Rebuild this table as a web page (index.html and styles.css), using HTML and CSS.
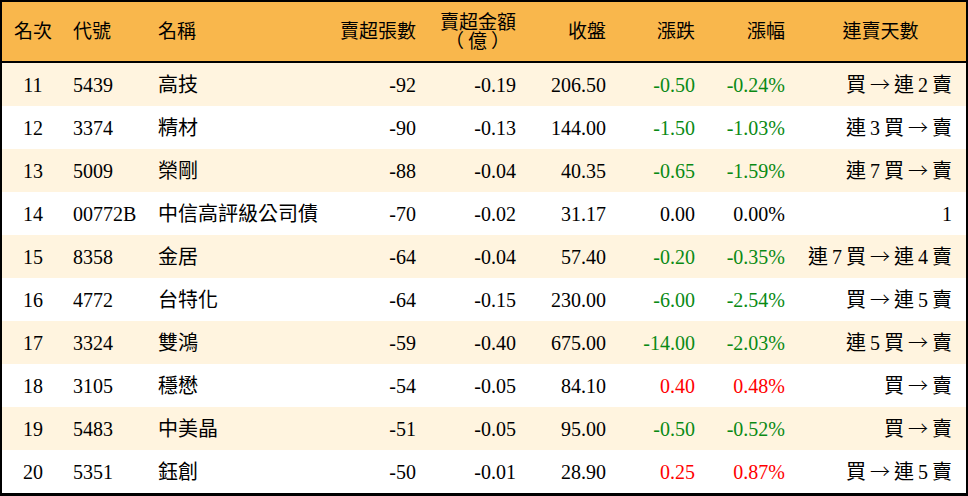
FILE: index.html
```html
<!DOCTYPE html>
<html lang="zh-Hant">
<head>
<meta charset="utf-8">
<link rel="stylesheet" href="styles.css">
</head>
<body>
<table class="rank">
  <colgroup>
    <col class="c-rank"><col class="c-code"><col class="c-name"><col class="c-vol"><col class="c-amt"><col class="c-close"><col class="c-chg"><col class="c-pct"><col class="c-days">
  </colgroup>
  <thead>
    <tr>
      <th class="center">名次</th>
      <th class="left">代號</th>
      <th class="left">名稱</th>
      <th class="right">賣超張數</th>
      <th class="right two">賣超金額<br><span class="paren">（億）</span></th>
      <th class="right">收盤</th>
      <th class="right">漲跌</th>
      <th class="right">漲幅</th>
      <th class="center">連賣天數</th>
    </tr>
  </thead>
  <tbody>
    <tr class="alt"><td class="center">11</td><td class="left">5439</td><td class="left">高技</td><td class="right">-92</td><td class="right">-0.19</td><td class="right">206.50</td><td class="right down">-0.50</td><td class="right down">-0.24%</td><td class="right days">買 <span class="arr">→</span> 連 2 賣</td></tr>
    <tr><td class="center">12</td><td class="left">3374</td><td class="left">精材</td><td class="right">-90</td><td class="right">-0.13</td><td class="right">144.00</td><td class="right down">-1.50</td><td class="right down">-1.03%</td><td class="right days">連 3 買 <span class="arr">→</span> 賣</td></tr>
    <tr class="alt"><td class="center">13</td><td class="left">5009</td><td class="left">榮剛</td><td class="right">-88</td><td class="right">-0.04</td><td class="right">40.35</td><td class="right down">-0.65</td><td class="right down">-1.59%</td><td class="right days">連 7 買 <span class="arr">→</span> 賣</td></tr>
    <tr><td class="center">14</td><td class="left">00772B</td><td class="left">中信高評級公司債</td><td class="right">-70</td><td class="right">-0.02</td><td class="right">31.17</td><td class="right">0.00</td><td class="right">0.00%</td><td class="right days">1</td></tr>
    <tr class="alt"><td class="center">15</td><td class="left">8358</td><td class="left">金居</td><td class="right">-64</td><td class="right">-0.04</td><td class="right">57.40</td><td class="right down">-0.20</td><td class="right down">-0.35%</td><td class="right days">連 7 買 <span class="arr">→</span> 連 4 賣</td></tr>
    <tr><td class="center">16</td><td class="left">4772</td><td class="left">台特化</td><td class="right">-64</td><td class="right">-0.15</td><td class="right">230.00</td><td class="right down">-6.00</td><td class="right down">-2.54%</td><td class="right days">買 <span class="arr">→</span> 連 5 賣</td></tr>
    <tr class="alt"><td class="center">17</td><td class="left">3324</td><td class="left">雙鴻</td><td class="right">-59</td><td class="right">-0.40</td><td class="right">675.00</td><td class="right down">-14.00</td><td class="right down">-2.03%</td><td class="right days">連 5 買 <span class="arr">→</span> 賣</td></tr>
    <tr><td class="center">18</td><td class="left">3105</td><td class="left">穩懋</td><td class="right">-54</td><td class="right">-0.05</td><td class="right">84.10</td><td class="right up">0.40</td><td class="right up">0.48%</td><td class="right days">買 <span class="arr">→</span> 賣</td></tr>
    <tr class="alt"><td class="center">19</td><td class="left">5483</td><td class="left">中美晶</td><td class="right">-51</td><td class="right">-0.05</td><td class="right">95.00</td><td class="right down">-0.50</td><td class="right down">-0.52%</td><td class="right days">買 <span class="arr">→</span> 賣</td></tr>
    <tr><td class="center">20</td><td class="left">5351</td><td class="left">鈺創</td><td class="right">-50</td><td class="right">-0.01</td><td class="right">28.90</td><td class="right up">0.25</td><td class="right up">0.87%</td><td class="right days">買 <span class="arr">→</span> 連 5 賣</td></tr>
  </tbody>
</table>
</body>
</html>
```
FILE: styles.css
```css
html, body {
  margin: 0;
  padding: 0;
  background: #ffffff;
}

.rank {
  width: 968px;
  border-collapse: separate;
  border-spacing: 0;
  table-layout: fixed;
  border: 2px solid #000;
  border-bottom-width: 3px;
  font-family: "Liberation Serif", "Noto Sans CJK TC", serif;
  font-size: 20px;
  color: #000;
}

.c-rank { width: 62px; }
.c-code { width: 86px; }
.c-name { width: 176px; }
.c-vol { width: 100px; }
.c-amt { width: 100px; }
.c-close { width: 90px; }
.c-chg { width: 89px; }
.c-pct { width: 90px; }
.c-days { width: 171px; }

.rank th {
  height: 59px;
  padding: 0 10px;
  font-weight: normal;
  background: #f9b74c;
  border-bottom: 2px solid #000;
  line-height: 19px;
  font-size: 19px;
  white-space: nowrap;
}

.rank th .paren {
  display: inline-block;
  padding-right: 2px;
  letter-spacing: 4px;
}

.rank td {
  height: 43px;
  padding: 0 10px;
  line-height: 20px;
  white-space: nowrap;
}

.rank th.left, .rank td.left { text-align: left; padding-left: 8px; padding-right: 0; }
.rank td:nth-child(2), .rank th:nth-child(2) { padding-left: 9px; }
.rank .center { text-align: center; padding: 0; }
.rank .right { text-align: right; }
.rank td.days { padding-right: 14px; word-spacing: -1px; }

.arr {
  font-family: "Noto Sans CJK TC", "DejaVu Sans", sans-serif;
  font-weight: 300;
}

.rank tr.alt td { background: #fff4df; }

.down { color: #0a8a14; }
.up { color: #ff0000; }
```
